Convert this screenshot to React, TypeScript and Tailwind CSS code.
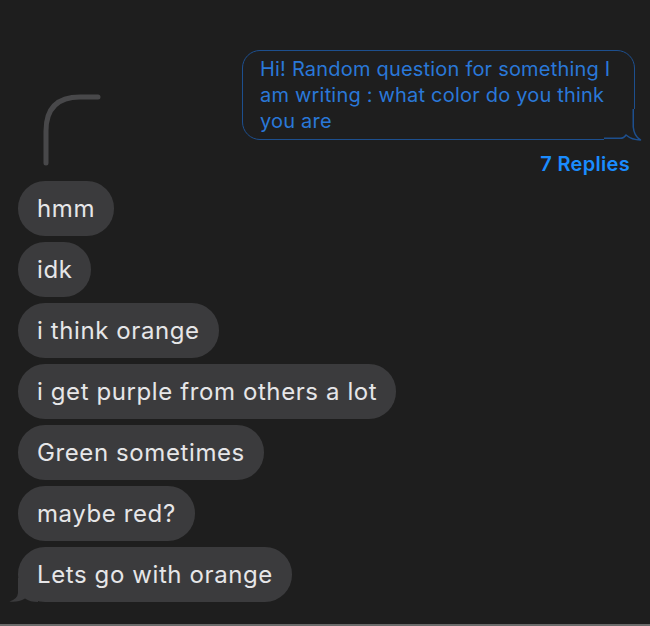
const REPLIES = [
	"hmm",
	"idk",
	"i think orange",
	"i get purple from others a lot",
	"Green sometimes",
	"maybe red?",
	"Lets go with orange",
];

/**
 * Left-side curved connector from the thread root into the replies.
 */
function ThreadLine(): JSX.Element {
	return (
		<svg width="70" height="76" viewBox="0 0 70 76" className="ml-[40px] mb-[7px] shrink-0">
			<path d="M6 70 L6 38 Q6 4 40 4 L58 4" fill="none" stroke="#48484a" strokeWidth="5" strokeLinecap="round" />
		</svg>
	);
}

/**
 * Outlined blue root message with its tail at the bottom right.
 */
function RootBubble(): JSX.Element {
	return (
		<div className="relative w-[393px] rounded-[18px] border-[1.5px] border-[#1d4f8e] px-[17px] py-[5px] text-[20px] leading-[26px] tracking-[0.2px] text-[#2a78d8]">
			Hi! Random question for something I am writing : what color do you think you are
			<svg viewBox="0 0 38 33" className="absolute right-[-8px] bottom-[-3px] h-[33px] w-[38px]">
				<rect x="0" y="0" width="38" height="33" fill="#1e1e1e" />
				<path
					d="M0 29.25 L16 29.25 Q20 29.25 22 26 Q28 31 36.5 31 Q30 27 29.25 18 L29.25 0"
					fill="none"
					stroke="#1d4f8e"
					strokeWidth="1.5"
					strokeLinejoin="round"
				/>
			</svg>
		</div>
	);
}

function ReplyBubble(props: { text: string; tail?: boolean }): JSX.Element {
	const { text, tail } = props;
	return (
		<div className="relative w-fit rounded-[27px] bg-[#3b3b3d] px-[19px] text-[24px] leading-[55px] tracking-[0.6px] text-[#e6e6e8]">
			{text}
			{tail ? (
				<svg viewBox="0 0 30 24" className="absolute left-[-10px] bottom-0 h-[24px] w-[30px]">
					<path d="M10 0 L10 15 Q9.5 21 1.5 23.6 Q10 24.6 17 20.5 Q22 24 30 24 L30 0 Z" fill="#3b3b3d" />
				</svg>
			) : null}
		</div>
	);
}

export default function App(): JSX.Element {
	return (
		<div
			className="flex h-[626px] w-[650px] flex-col border-b-2 border-[#6b6b6b] bg-[#1e1e1e]"
			style={{ fontFamily: "Inter, 'Noto Sans', sans-serif" }}
		>
			<div className="flex items-end justify-between pt-[50px] pr-[15px]">
				<ThreadLine />
				<div className="flex flex-col items-end">
					<RootBubble />
					<div className="mt-[12px] mr-[5px] text-[20px] leading-[24px] tracking-[0.3px] font-semibold text-[#1a8cff]">7 Replies</div>
				</div>
			</div>
			<div className="mt-[5px] flex flex-col gap-[6px] pl-[18px]">
				{REPLIES.map((r, i) => (
					<ReplyBubble key={r} text={r} tail={i === REPLIES.length - 1} />
				))}
			</div>
		</div>
	);
}
